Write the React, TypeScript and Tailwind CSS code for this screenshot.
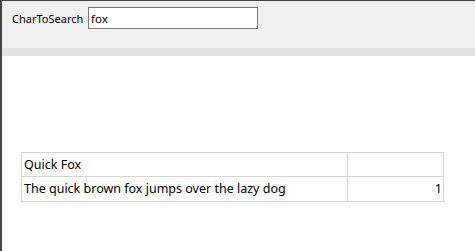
export default function App() {
	return (
		<div className="flex h-[251px] w-[475px] flex-col border-t border-l-2 border-[#444444] bg-white font-['Segoe_UI','Noto_Sans',sans-serif] text-black">
			{/* Toolbar */}
			<div className="flex h-[47px] items-start bg-[#f0f0f0] pl-[10px] pt-[6px]">
				<label className="mt-[5px] w-[76px] text-[11px] leading-[14px]">CharToSearch</label>
				<input
					defaultValue="fox"
					className="h-[22px] w-[170px] border border-[#7a7a7a] bg-white px-[2px] text-[11.5px] leading-[14px] outline-none"
				/>
			</div>
			<div className="h-[8px] bg-[#e1e1e1]" />

			{/* Result grid */}
			<div className="pl-[19px] pt-[96px]">
				<table className="w-[423px] border-collapse text-[12.5px]">
					<tbody>
						<tr className="h-[24px]">
							<td className="border border-[#d4d4d4] px-[2px] leading-[16px]">Quick Fox</td>
							<td className="w-[96px] border border-[#d4d4d4]" />
						</tr>
						<tr className="h-[25px]">
							<td className="border border-[#d4d4d4] px-[2px] leading-[16px]">
								The quick brown fox jumps over the lazy dog
							</td>
							<td className="border border-[#d4d4d4] pl-[3px] pr-[1px] text-right leading-[16px]">1</td>
						</tr>
					</tbody>
				</table>
			</div>
		</div>
	);
}
